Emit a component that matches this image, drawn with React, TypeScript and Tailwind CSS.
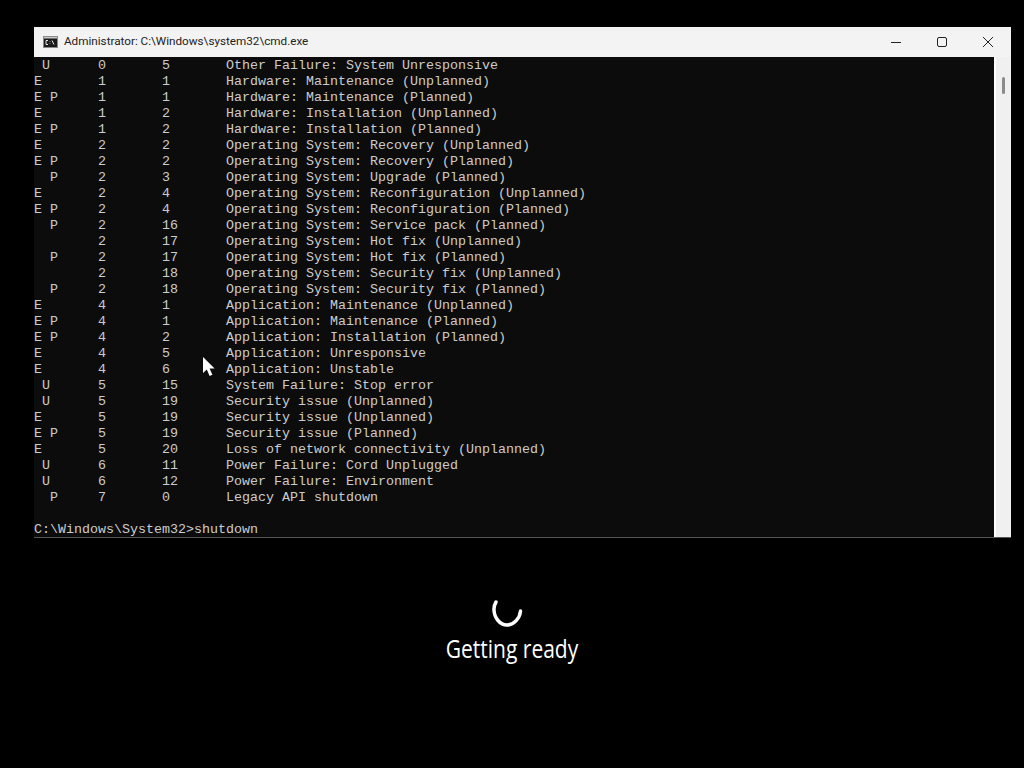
const rows = [
  ' U      0       5       Other Failure: System Unresponsive',
  'E       1       1       Hardware: Maintenance (Unplanned)',
  'E P     1       1       Hardware: Maintenance (Planned)',
  'E       1       2       Hardware: Installation (Unplanned)',
  'E P     1       2       Hardware: Installation (Planned)',
  'E       2       2       Operating System: Recovery (Unplanned)',
  'E P     2       2       Operating System: Recovery (Planned)',
  '  P     2       3       Operating System: Upgrade (Planned)',
  'E       2       4       Operating System: Reconfiguration (Unplanned)',
  'E P     2       4       Operating System: Reconfiguration (Planned)',
  '  P     2       16      Operating System: Service pack (Planned)',
  '        2       17      Operating System: Hot fix (Unplanned)',
  '  P     2       17      Operating System: Hot fix (Planned)',
  '        2       18      Operating System: Security fix (Unplanned)',
  '  P     2       18      Operating System: Security fix (Planned)',
  'E       4       1       Application: Maintenance (Unplanned)',
  'E P     4       1       Application: Maintenance (Planned)',
  'E P     4       2       Application: Installation (Planned)',
  'E       4       5       Application: Unresponsive',
  'E       4       6       Application: Unstable',
  ' U      5       15      System Failure: Stop error',
  ' U      5       19      Security issue (Unplanned)',
  'E       5       19      Security issue (Unplanned)',
  'E P     5       19      Security issue (Planned)',
  'E       5       20      Loss of network connectivity (Unplanned)',
  ' U      6       11      Power Failure: Cord Unplugged',
  ' U      6       12      Power Failure: Environment',
  '  P     7       0       Legacy API shutdown',
  ' ',
  'C:\\Windows\\System32>shutdown',
];

function CmdIcon() {
  return (
    <svg width="15" height="12" viewBox="0 0 15 12" className="shrink-0">
      <rect x="0.5" y="0.5" width="14" height="11" fill="#1a1a1a" stroke="#8a8a8a" />
      <rect x="1" y="1" width="13" height="1.5" fill="#c8c8c8" />
      <path d="M5 4.5H3V8.5H5M7 5.5V6M7 7.5V8M9 4.5L11 8.5" fill="none" stroke="#e8e8e8" strokeWidth="1" />
    </svg>
  );
}

function WindowButtons() {
  return (
    <div className="flex items-center">
      <svg width="12" height="12" viewBox="0 0 12 12" className="mr-[34px]">
        <path d="M1 6.5H11" stroke="#222" strokeWidth="1" />
      </svg>
      <svg width="12" height="12" viewBox="0 0 12 12" className="mr-[34px]">
        <rect x="1.5" y="1.5" width="9" height="9" rx="1.5" fill="none" stroke="#222" strokeWidth="1" />
      </svg>
      <svg width="12" height="12" viewBox="0 0 12 12">
        <path d="M1 1L11 11M11 1L1 11" stroke="#222" strokeWidth="1" />
      </svg>
    </div>
  );
}

function Spinner() {
  return (
    <svg width="32" height="32" viewBox="0 0 32 32" className="block">
      <path d="M5 6 C3.5 8.5 2.8 11 3 14 C3.3 22 9 29 16 29 C23 29 29 22 29.5 15" fill="none" stroke="#fff" strokeWidth="3.5" strokeLinecap="round" />
    </svg>
  );
}

export default function App() {
  return (
    <div className="relative h-[768px] w-[1024px] overflow-hidden bg-black pl-[34px] pt-[27px]">
      <div className="w-[977px] border-b border-[#555]">
        <div className="flex h-[30px] items-center bg-[#f3f3f3] pl-[9px] pr-[17px]">
          <CmdIcon />
          <span className="ml-[6px] flex-1 font-['Roboto',sans-serif] text-[11.7px] text-[#222]">
            Administrator: C:\Windows\system32\cmd.exe
          </span>
          <WindowButtons />
        </div>
        <div className="flex h-[480px]">
          <pre className="w-[960px] bg-[#0c0c0c] font-['Liberation_Mono',monospace] text-[13.33px] leading-[18px] text-[#cccccc]">
            {rows.map((r, i) => (
              <div key={i} className="h-[16px]">{r}</div>
            ))}
          </pre>
          <div className="flex-1 border-l-2 border-white bg-[#f0f0f0] pl-[6px] pt-[20px]">
            <div className="h-[17px] w-[3px] rounded-full bg-[#8b8b8b]" />
          </div>
        </div>
      </div>

      {/* mouse pointer */}
      <svg width="14" height="20" viewBox="0 0 14 20" className="absolute left-[202px] top-[357px]">
        <path d="M1 0V16L4.8 12.6L7.6 19L10.4 17.8L7.6 11.6H12.6Z" fill="#fff" />
      </svg>

      <div className="ml-[-34px] flex flex-col items-center pt-[58px]">
        <div className="ml-[-10px]">
          <Spinner />
        </div>
        <div className="mt-[4px] origin-top scale-y-[1.2] font-['Open_Sans',sans-serif] text-[21px] font-medium leading-[28px] text-white">
          Getting ready
        </div>
      </div>
    </div>
  );
}
